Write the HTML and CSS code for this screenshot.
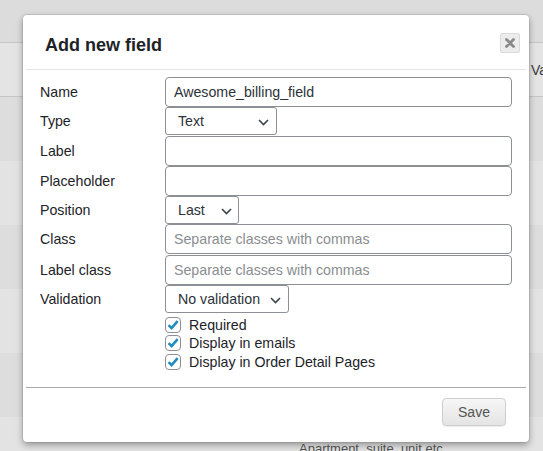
FILE: index.html
```html
<!DOCTYPE html>
<html lang="en">
<head>
<meta charset="utf-8">
<title>Add new field</title>
<link rel="stylesheet" href="styles.css">
</head>
<body>
<div class="page">
  <div class="topbar"></div>
  <div class="table">
    <div class="thead"><span class="th-text">Va</span></div>
    <div class="trow dark"></div>
    <div class="trow"></div>
    <div class="trow dark"></div>
    <div class="trow"></div>
    <div class="trow dark"></div>
    <div class="trow last"><span class="hint">Apartment, suite, unit etc.</span></div>
  </div>
</div>

<div class="modal">
  <div class="modal-header">
    <h2 class="modal-title">Add new field</h2>
    <button class="close" type="button" aria-label="Close">
      <svg width="10" height="10" viewBox="0 0 10 10"><path d="M1.5 1.5 L8.5 8.5 M8.5 1.5 L1.5 8.5" stroke="#8a8a8a" stroke-width="2.8" stroke-linecap="round"/></svg>
    </button>
  </div>
  <div class="modal-body">
    <div class="form">
      <div class="lbl">Name</div>
      <div class="field"><div class="input">Awesome_billing_field</div></div>

      <div class="lbl">Type</div>
      <div class="field"><div class="select w-type">Text<svg class="chev" width="11" height="7" viewBox="0 0 11 7"><path d="M1 1 L5.5 5.5 L10 1" fill="none" stroke="#3c434a" stroke-width="1.6"/></svg></div></div>

      <div class="lbl">Label</div>
      <div class="field"><div class="input"></div></div>

      <div class="lbl">Placeholder</div>
      <div class="field"><div class="input"></div></div>

      <div class="lbl">Position</div>
      <div class="field"><div class="select w-pos">Last<svg class="chev" width="11" height="7" viewBox="0 0 11 7"><path d="M1 1 L5.5 5.5 L10 1" fill="none" stroke="#3c434a" stroke-width="1.6"/></svg></div></div>

      <div class="lbl">Class</div>
      <div class="field"><div class="input ph">Separate classes with commas</div></div>

      <div class="lbl">Label class</div>
      <div class="field"><div class="input ph">Separate classes with commas</div></div>

      <div class="lbl">Validation</div>
      <div class="field"><div class="select w-val">No validation<svg class="chev" width="11" height="7" viewBox="0 0 11 7"><path d="M1 1 L5.5 5.5 L10 1" fill="none" stroke="#3c434a" stroke-width="1.6"/></svg></div></div>

      <div class="lbl"></div>
      <div class="checks">
        <div class="check"><span class="box"><svg width="14" height="14" viewBox="0 0 14 14"><path d="M2.6 7.2 L5.6 10.2 L11.6 3.2" fill="none" stroke="#1e8cbe" stroke-width="2.6"/></svg></span>Required</div>
        <div class="check"><span class="box"><svg width="14" height="14" viewBox="0 0 14 14"><path d="M2.6 7.2 L5.6 10.2 L11.6 3.2" fill="none" stroke="#1e8cbe" stroke-width="2.6"/></svg></span>Display in emails</div>
        <div class="check"><span class="box"><svg width="14" height="14" viewBox="0 0 14 14"><path d="M2.6 7.2 L5.6 10.2 L11.6 3.2" fill="none" stroke="#1e8cbe" stroke-width="2.6"/></svg></span>Display in Order Detail Pages</div>
      </div>
    </div>
  </div>
  <div class="modal-footer">
    <button class="btn" type="button">Save</button>
  </div>
</div>
</body>
</html>
```
FILE: styles.css
```css
* { box-sizing: border-box; }
html, body { margin: 0; padding: 0; }
body {
  width: 543px;
  height: 451px;
  overflow: hidden;
  position: relative;
  font-family: "Liberation Sans", Arial, sans-serif;
  font-size: 14.2px;
  color: #1d2327;
  background: #dcdcdc;
}

/* background page (dimmed) */
.page { width: 543px; }
.topbar { height: 42px; background: #dcdcdc; }
.table { border-top: 1px solid #c6c6c6; }
.thead {
  height: 54px;
  background: #e4e4e4;
  border-bottom: 1px solid #c6c6c6;
  display: flex;
  align-items: center;
  padding-left: 531px;
  color: #3a3a3a;
  white-space: nowrap;
}
.th-text { font-size: 14px; }
.trow { height: 64px; background: #e3e3e3; }
.trow.dark { background: #dddddd; }
.hint {
  display: block;
  padding: 24px 0 0 299px;
  font-size: 13px;
  line-height: 15px;
  color: #555;
  white-space: nowrap;
}

/* modal */
.modal {
  position: absolute;
  left: 23px;
  top: 15px;
  width: 506px;
  height: 427px;
  background: #fff;
  border-radius: 4px;
  box-shadow: 0 0 0 1px rgba(0,0,0,0.08), 0 3px 7px rgba(0,0,0,0.35);
  display: flex;
  flex-direction: column;
}
.modal-header {
  position: relative;
  padding: 20px 19px 13px;
  margin: 0 3px;
  border-bottom: 1px solid #e6e6e6;
}
.modal-title {
  margin: 0;
  font-size: 18px;
  font-weight: bold;
  line-height: 21px;
  color: #1d2327;
}
.close {
  position: absolute;
  top: 18px;
  right: 6px;
  width: 20px;
  height: 20px;
  padding: 0;
  border: 1px solid #dadada;
  background: #ececec;
  border-radius: 2px;
  display: flex;
  align-items: center;
  justify-content: center;
}

.modal-body { padding: 7px 17px 0 17px; }
.form {
  display: grid;
  grid-template-columns: 125px 1fr;
  row-gap: 0.3px;
  align-items: center;
}
.lbl { color: #1d2327; line-height: 16px; }
.field { display: flex; }
.input {
  width: 100%;
  height: 30px;
  border: 1px solid #8c8f94;
  border-radius: 4px;
  padding: 0 8px;
  display: flex;
  align-items: center;
  color: #2c3338;
  white-space: nowrap;
}
.input.ph { color: #8a8d91; }
.select {
  height: 28px;
  border: 1px solid #8c8f94;
  border-radius: 3px;
  padding: 0 0 0 12px;
  display: flex;
  align-items: center;
  color: #2c3338;
  position: relative;
  white-space: nowrap;
}
.chev { position: absolute; top: 11px; }
.w-type { width: 112px; }
.w-type .chev { left: 92px; }
.w-pos { width: 74px; }
.w-pos .chev { left: 55px; }
.w-val { width: 124px; }
.w-val .chev { left: 104px; }

.checks {
  padding-top: 2px;
  display: flex;
  flex-direction: column;
}
.check {
  height: 18.5px;
  display: flex;
  align-items: center;
  color: #1d2327;
  white-space: nowrap;
  line-height: 16px;
}
.box {
  width: 16px;
  height: 16px;
  border: 1px solid #8c8f94;
  border-radius: 4px;
  margin-right: 8px;
  display: flex;
  align-items: center;
  justify-content: center;
  background: #fff;
  flex: none;
}

.modal-footer {
  margin: 16px 3px 0;
  border-top: 1px solid #a9a9a9;
  padding: 10px 20px 0 0;
  display: flex;
  justify-content: flex-end;
}
.btn {
  width: 64px;
  height: 28px;
  font-family: "Liberation Sans", Arial, sans-serif;
  font-size: 14px;
  color: #555;
  background: linear-gradient(#f6f6f6, #e4e4e4);
  border: 1px solid #cfcfcf;
  border-radius: 4px;
  box-shadow: 0 1px 1px rgba(0,0,0,0.08);
  padding: 0;
}
```
